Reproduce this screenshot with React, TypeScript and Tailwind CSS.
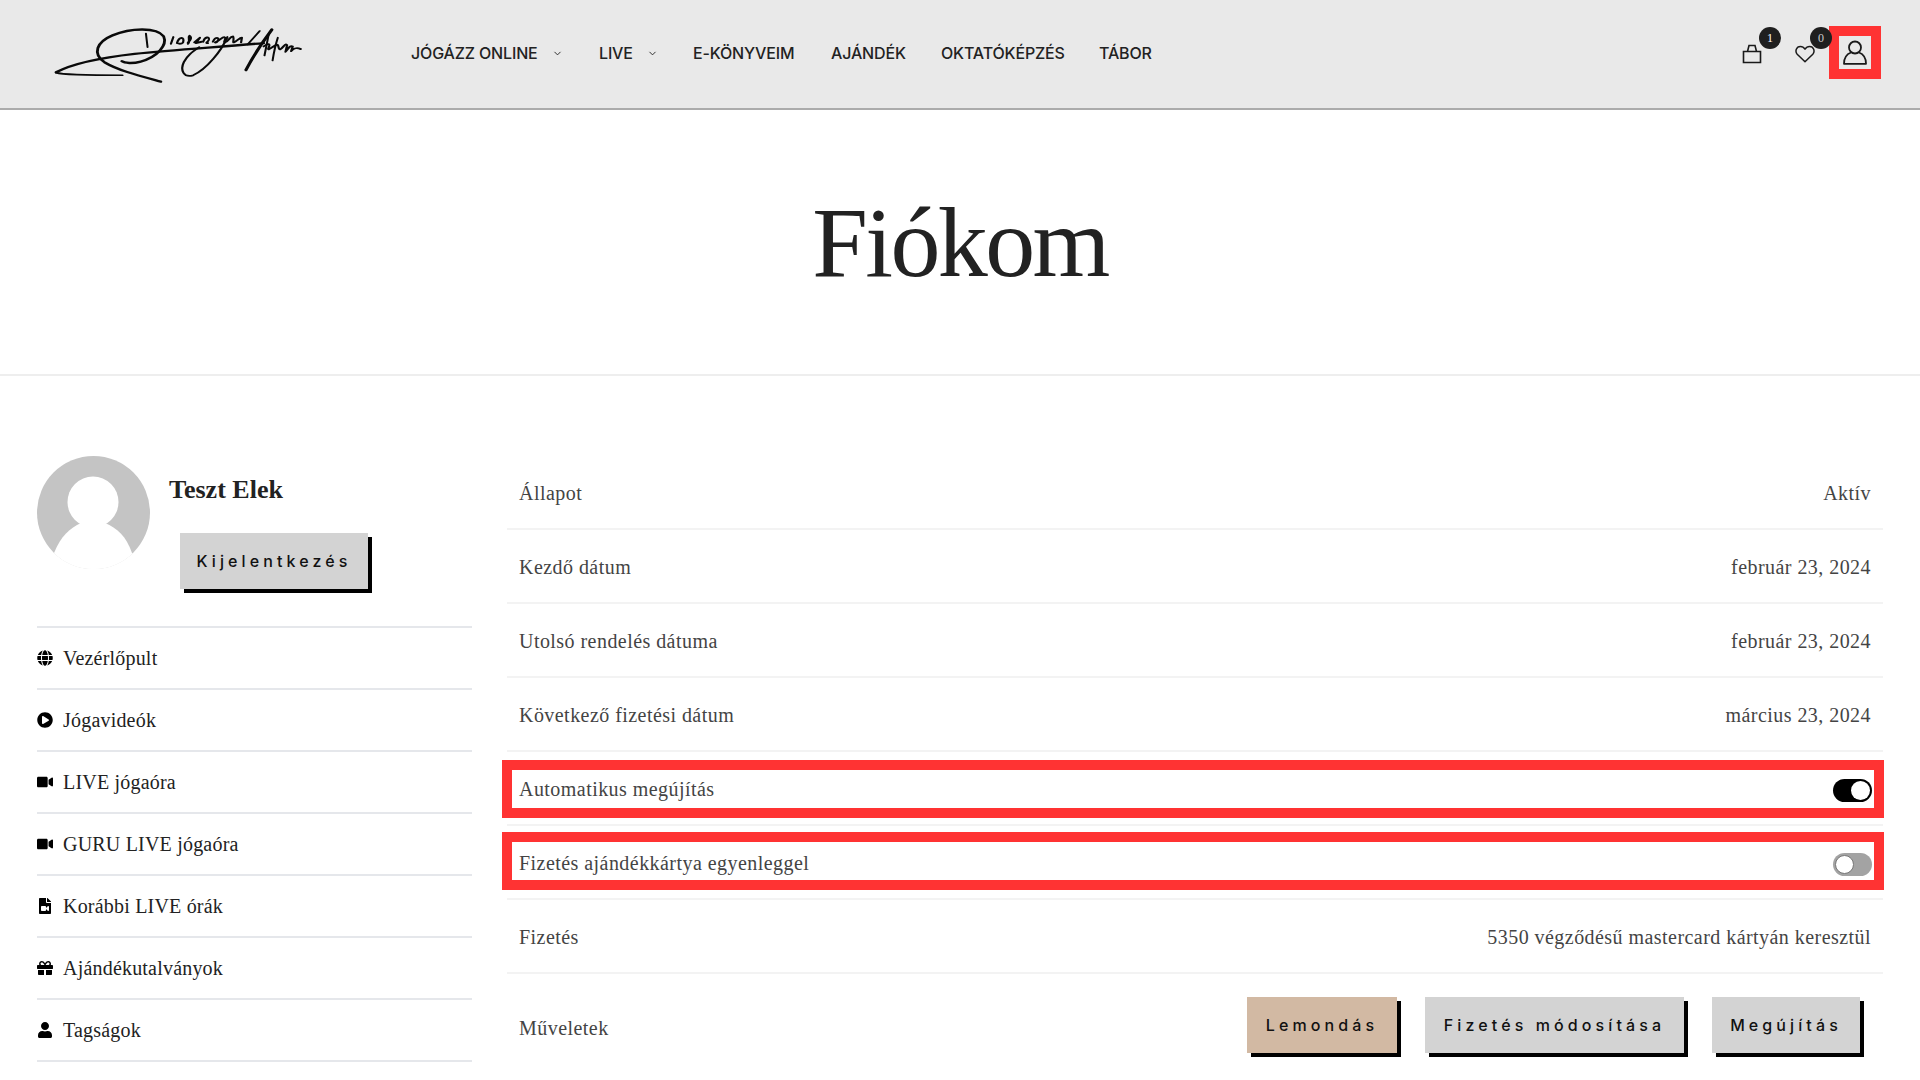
import React from "react";
import { ChevronDown } from "lucide-react";
import { FaGlobe, FaPlayCircle, FaVideo, FaFileVideo, FaGift, FaUser } from "react-icons/fa";

const serif = "font-['Liberation_Serif',serif]";
const sans = "font-['Inter',sans-serif]";

const navItems = [
  { label: "JÓGÁZZ ONLINE", caret: true, cls: "w-[188px]" },
  { label: "LIVE", caret: true, cls: "w-[94px]" },
  { label: "E-KÖNYVEIM", caret: false, cls: "w-[138px]" },
  { label: "AJÁNDÉK", caret: false, cls: "w-[110px]" },
  { label: "OKTATÓKÉPZÉS", caret: false, cls: "w-[158px]" },
  { label: "TÁBOR", caret: false, cls: "w-[70px]" },
];

const sideItems = [
  { label: "Vezérlőpult", icon: <FaGlobe size={16} /> },
  { label: "Jógavideók", icon: <FaPlayCircle size={16} /> },
  { label: "LIVE jógaóra", icon: <FaVideo size={16} /> },
  { label: "GURU LIVE jógaóra", icon: <FaVideo size={16} /> },
  { label: "Korábbi LIVE órák", icon: <FaFileVideo size={16} /> },
  { label: "Ajándékutalványok", icon: <FaGift size={16} /> },
  { label: "Tagságok", icon: <FaUser size={16} /> },
];

const rows = [
  { label: "Állapot", value: "Aktív" },
  { label: "Kezdő dátum", value: "február 23, 2024" },
  { label: "Utolsó rendelés dátuma", value: "február 23, 2024" },
  { label: "Következő fizetési dátum", value: "március 23, 2024" },
];

function Signature() {
  return (
    <svg width="248" height="57" viewBox="130 80 615 170" preserveAspectRatio="none" fill="none" stroke="#0a0a0a" strokeLinecap="round" strokeLinejoin="round">
      <path strokeWidth="7" d="M395 243 C340 225 290 210 255 185 C225 160 235 125 275 105 C320 82 385 80 402 108 C412 135 385 170 345 183 C325 190 305 188 298 182" />
      <path strokeWidth="7" d="M135 215 C175 190 240 172 330 160 C430 147 540 140 650 128" />
      <path strokeWidth="5" d="M135 216 C150 222 220 224 300 224" />
      <path strokeWidth="5" d="M358 100 L362 140" />
      <path strokeWidth="5.5" d="M420 130 L426 110 M435 128 C440 108 455 108 450 126 C446 132 438 130 435 128 M462 126 C470 120 472 110 466 106 C460 112 470 122 462 130 M478 126 L492 112 L482 128 L496 124 M500 124 C504 108 516 108 514 118 C510 128 504 128 512 128 M524 124 C530 108 542 110 536 122 C532 130 526 126 532 124 C540 122 546 110 552 110 C560 112 548 126 554 126 C562 124 566 108 574 108 C578 118 572 126 576 126 C584 122 590 112 596 112 L594 126" />
      <path strokeWidth="5.5" d="M560 110 C545 150 510 205 475 224 C452 232 442 210 452 185 C460 165 472 155 490 140" />
      <path strokeWidth="8" d="M670 88 C650 120 625 165 606 208" />
      <path strokeWidth="5" d="M640 92 L610 132 M662 104 L652 165 M685 112 C680 130 676 150 672 180" />
      <path strokeWidth="5.5" d="M650 138 C660 128 668 128 662 142 C658 154 670 140 680 134 C690 128 684 150 692 146 C700 140 702 128 708 134 L704 154 C712 142 716 134 722 138 L718 152 C726 142 732 140 742 146" />
    </svg>
  );
}

function Btn({ label, bg, cls }: { label: string; bg: string; cls: string }) {
  return (
    <button className={`flex h-[56px] items-center justify-center ${bg} ${cls} ${sans} text-[16px] font-medium tracking-[4.1px] text-[#111] shadow-[4px_4px_0_#000]`}>
      {label}
    </button>
  );
}

function Toggle({ on }: { on: boolean }) {
  return (
    <div className={`-mr-[1px] mt-[5px] flex h-[23px] w-[39px] items-center rounded-full px-[2px] ${on ? "justify-end bg-black" : "justify-start bg-[#a3a3a3]"}`}>
      <div className={`h-[19px] w-[19px] rounded-full bg-white ${on ? "" : "border border-[#777]"}`} />
    </div>
  );
}

function Row({ label, children }: { label: string; children: React.ReactNode }) {
  return (
    <div className="relative flex h-[74px] items-center justify-between border-b-2 border-[#f3f3f3] px-[12px]">
      <span className="pt-[1px] text-[20px] tracking-[0.45px] text-[#444]">{label}</span>
      {children}
    </div>
  );
}

function RedBox({ cls }: { cls: string }) {
  return <div className={`absolute -left-[5px] -right-[1px] h-[58px] border-[10px] border-[#ff3333] ${cls}`} />;
}

export default function App() {
  return (
    <div className={`h-[1080px] w-full overflow-hidden bg-white ${serif}`}>
      {/* Header */}
      <header className="flex h-[110px] items-center border-b-2 border-[#ababab] bg-[#e9e9e9] pl-[54px] pr-[39px]">
        <div className="mt-[2px] w-[357px]">
          <Signature />
        </div>
        <nav className={`mb-[2px] flex items-center ${sans} text-[16px] font-medium tracking-[-0.01em] text-[#222]`}>
          {navItems.map((item) => (
            <div key={item.label} className={`flex items-center gap-[14px] ${item.cls}`}>
              <span>{item.label}</span>
              {item.caret && <ChevronDown size={11} strokeWidth={2} />}
            </div>
          ))}
        </nav>
        <div className="ml-auto flex items-center">
          <div className="relative mr-[33px]">
            <svg width="20" height="20" viewBox="0 0 20 20" fill="none" stroke="#1a1a1a" strokeWidth="1.6">
              <path d="M1.5 7.5h17v11h-17z" />
              <path d="M5.5 7.5 7 1.5h6l1.5 6" />
            </svg>
            <div className="absolute -right-[19px] -top-[17px] flex h-[22px] w-[22px] items-center justify-center rounded-full bg-[#1f1f1f] text-[12px] text-white">1</div>
          </div>
          <div className="relative mr-[14px]">
            <svg width="20" height="18" viewBox="0 0 20 18" fill="none" stroke="#1a1a1a" strokeWidth="1.5" strokeLinejoin="round">
              <path d="M10 16.8 2.2 9.2C-.2 6.6 1.2 1.4 5.4 1.4 7.6 1.4 9 2.6 10 4.2c1-1.6 2.4-2.8 4.6-2.8 4.2 0 5.6 5.2 3.2 7.8z" />
            </svg>
            <div className="absolute -right-[17px] -top-[18px] flex h-[22px] w-[22px] items-center justify-center rounded-full bg-[#1f1f1f] text-[12px] text-[#ccc]">0</div>
          </div>
          <div className="mb-[4px] flex h-[53px] w-[52px] items-center justify-center border-[10px] border-[#ff3333]">
            <svg width="24" height="25" viewBox="0 0 24 25" fill="none" stroke="#1a1a1a" strokeWidth="1.8" strokeLinejoin="round">
              <circle cx="12" cy="7.5" r="6" />
              <path d="M8 12.5C4 14 1 18 1 23.8h22C23 18 20 14 16 12.5" />
            </svg>
          </div>
        </div>
      </header>

      {/* Title */}
      <section className="flex h-[266px] items-center justify-center border-b-2 border-[#eeeeee]">
        <h1 className="mt-[1px] text-[100px] leading-none tracking-[-2.6px] text-[#222]">Fiókom</h1>
      </section>

      {/* Content */}
      <div className="flex pl-[37px] pt-[80px]">
        <aside className="w-[435px]">
          <div className="flex h-[172px] border-b-2 border-[#e5e7eb]">
            <svg width="113" height="113" viewBox="0 0 113 113">
              <defs>
                <clipPath id="avatar-clip"><circle cx="56.5" cy="56.5" r="56.5" /></clipPath>
              </defs>
              <g clipPath="url(#avatar-clip)">
                <rect width="113" height="113" fill="#c4c4c4" />
                <circle cx="56" cy="46" r="25.5" fill="#fff" />
                <path d="M17 97C24 80 33 72 44 67H68C80 72 89 80 95 97V113H17Z" fill="#fff" />
                <rect y="97" width="113" height="16" fill="#fff" />
              </g>
            </svg>
            <div className="ml-[19px]">
              <div className="mt-[18px] text-[26px] font-bold leading-[32px] text-[#222]">Teszt Elek</div>
              <Btn label="Kijelentkezés" bg="bg-[#d3d3d3]" cls="ml-[11px] mt-[27px] w-[188px]" />
            </div>
          </div>
          {sideItems.map((item) => (
            <div key={item.label} className="flex h-[62px] items-center gap-[10px] border-b-2 border-[#e5e7eb] text-[20px] tracking-[0.2px] text-[#222]">
              <span className="flex w-[16px] justify-center text-black">{item.icon}</span>
              <span>{item.label}</span>
            </div>
          ))}
        </aside>

        <main className="ml-[35px] w-[1376px]">
          {rows.map((r) => (
            <Row key={r.label} label={r.label}>
              <span className="pt-[1px] text-[20px] tracking-[0.45px] text-[#444]">{r.value}</span>
            </Row>
          ))}
          <Row label="Automatikus megújítás">
            <RedBox cls="top-[8px]" />
            <Toggle on />
          </Row>
          <Row label="Fizetés ajándékkártya egyenleggel">
            <RedBox cls="top-[6px]" />
            <Toggle on={false} />
          </Row>
          <Row label="Fizetés">
            <span className="pt-[1px] text-[20px] tracking-[0.45px] text-[#444]">5350 végződésű mastercard kártyán keresztül</span>
          </Row>
          <div className="flex h-[102px] items-center justify-between pl-[12px] pr-[23px]">
            <span className="mt-[5px] text-[20px] tracking-[0.45px] text-[#444]">Műveletek</span>
            <div className="flex gap-[28px]">
              <Btn label="Lemondás" bg="bg-[#d2b9a3]" cls="w-[150px]" />
              <Btn label="Fizetés módosítása" bg="bg-[#d3d3d3]" cls="w-[259px]" />
              <Btn label="Megújítás" bg="bg-[#d3d3d3]" cls="w-[148px]" />
            </div>
          </div>
        </main>
      </div>
    </div>
  );
}
